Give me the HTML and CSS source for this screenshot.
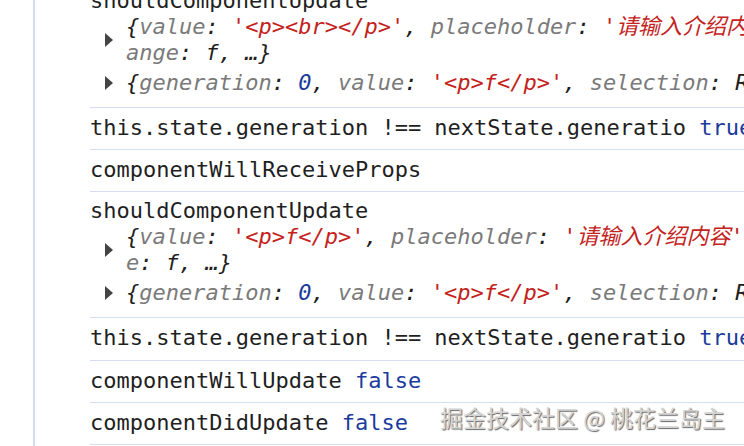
FILE: index.html
```html
<!DOCTYPE html>
<html lang="zh-CN">
<head>
<meta charset="utf-8">
<title>Console</title>
<link rel="stylesheet" href="styles.css">
</head>
<body>
<div class="console">
  <div class="msg group first">
    <div class="line">shouldComponentUpdate</div>
    <div class="obj">
      <span class="tri"></span>
      <div class="lines">
        <div class="line">{<span class="k">value</span>: <span class="s">'&lt;p&gt;&lt;br&gt;&lt;/p&gt;'</span>, <span class="k">placeholder</span>: <span class="s">'请输入介绍内容'</span>, <span class="k">onCh</span></div>
        <div class="line"><span class="k">ange</span>: f, …}</div>
      </div>
    </div>
    <div class="obj second">
      <span class="tri"></span>
      <div class="lines">
        <div class="line">{<span class="k">generation</span>: <span class="n">0</span>, <span class="k">value</span>: <span class="s">'&lt;p&gt;f&lt;/p&gt;'</span>, <span class="k">selection</span>: Record</div>
      </div>
    </div>
  </div>
  <div class="msg"><div class="line">this.state.generation !== nextState.generatio <span class="b">true</span></div></div>
  <div class="msg"><div class="line">componentWillReceiveProps</div></div>
  <div class="msg group">
    <div class="line">shouldComponentUpdate</div>
    <div class="obj">
      <span class="tri"></span>
      <div class="lines">
        <div class="line">{<span class="k">value</span>: <span class="s">'&lt;p&gt;f&lt;/p&gt;'</span>, <span class="k">placeholder</span>: <span class="s">'请输入介绍内容'</span>, <span class="k">onChang</span></div>
        <div class="line"><span class="k">e</span>: f, …}</div>
      </div>
    </div>
    <div class="obj second">
      <span class="tri"></span>
      <div class="lines">
        <div class="line">{<span class="k">generation</span>: <span class="n">0</span>, <span class="k">value</span>: <span class="s">'&lt;p&gt;f&lt;/p&gt;'</span>, <span class="k">selection</span>: Record</div>
      </div>
    </div>
  </div>
  <div class="msg tall"><div class="line">this.state.generation !== nextState.generatio <span class="b">true</span></div></div>
  <div class="msg"><div class="line">componentWillUpdate <span class="b">false</span></div></div>
  <div class="msg"><div class="line">componentDidUpdate <span class="b">false</span></div></div>
</div>
<div class="watermark">掘金技术社区 @ 桃花兰岛主</div>
</body>
</html>
```
FILE: styles.css
```css
html, body {
  margin: 0;
  padding: 0;
  background: #ffffff;
  overflow: hidden;
  width: 744px;
  height: 446px;
}

.console {
  margin-left: 33px;
  border-left: 2px solid #d3def3;
  padding-left: 55px;
  height: 464px;
  font-family: "DejaVu Sans Mono", "Noto Sans CJK SC", monospace;
  font-size: 22px;
  color: #1f1f1f;
}

.msg {
  border-bottom: 1px solid #d3def3;
  padding: 7px 0 8px;
}

.msg.tall {
  padding-bottom: 9px;
}

.group {
  padding: 6px 0 11px;
}

.first {
  margin-top: -18px;
}

.line {
  line-height: 26px;
  height: 26px;
  white-space: pre;
  overflow: hidden;
}

.obj {
  display: flex;
  align-items: center;
  font-style: italic;
}

.obj.second {
  margin-top: 4px;
}

.tri {
  flex: none;
  width: 0;
  height: 0;
  margin-left: 15px;
  margin-right: 13px;
  border-left: 8px solid #444444;
  border-top: 7px solid transparent;
  border-bottom: 7px solid transparent;
}

.lines {
  flex: 1;
  min-width: 0;
}

.k { color: #7a7a7a; }
.s { color: #c4221c; }
.n { color: #1b3b9c; }
.b { color: #1b3b9c; }

.watermark {
  position: absolute;
  left: 440px;
  top: 401px;
  font-family: "Noto Sans CJK SC", sans-serif;
  font-size: 23px;
  line-height: 32px;
  color: #d4d4d4;
  text-shadow: 1px 1px 1px rgba(0, 0, 0, 0.6), -1px -1px 0 rgba(255, 255, 255, 0.9);
  white-space: pre;
}
```
